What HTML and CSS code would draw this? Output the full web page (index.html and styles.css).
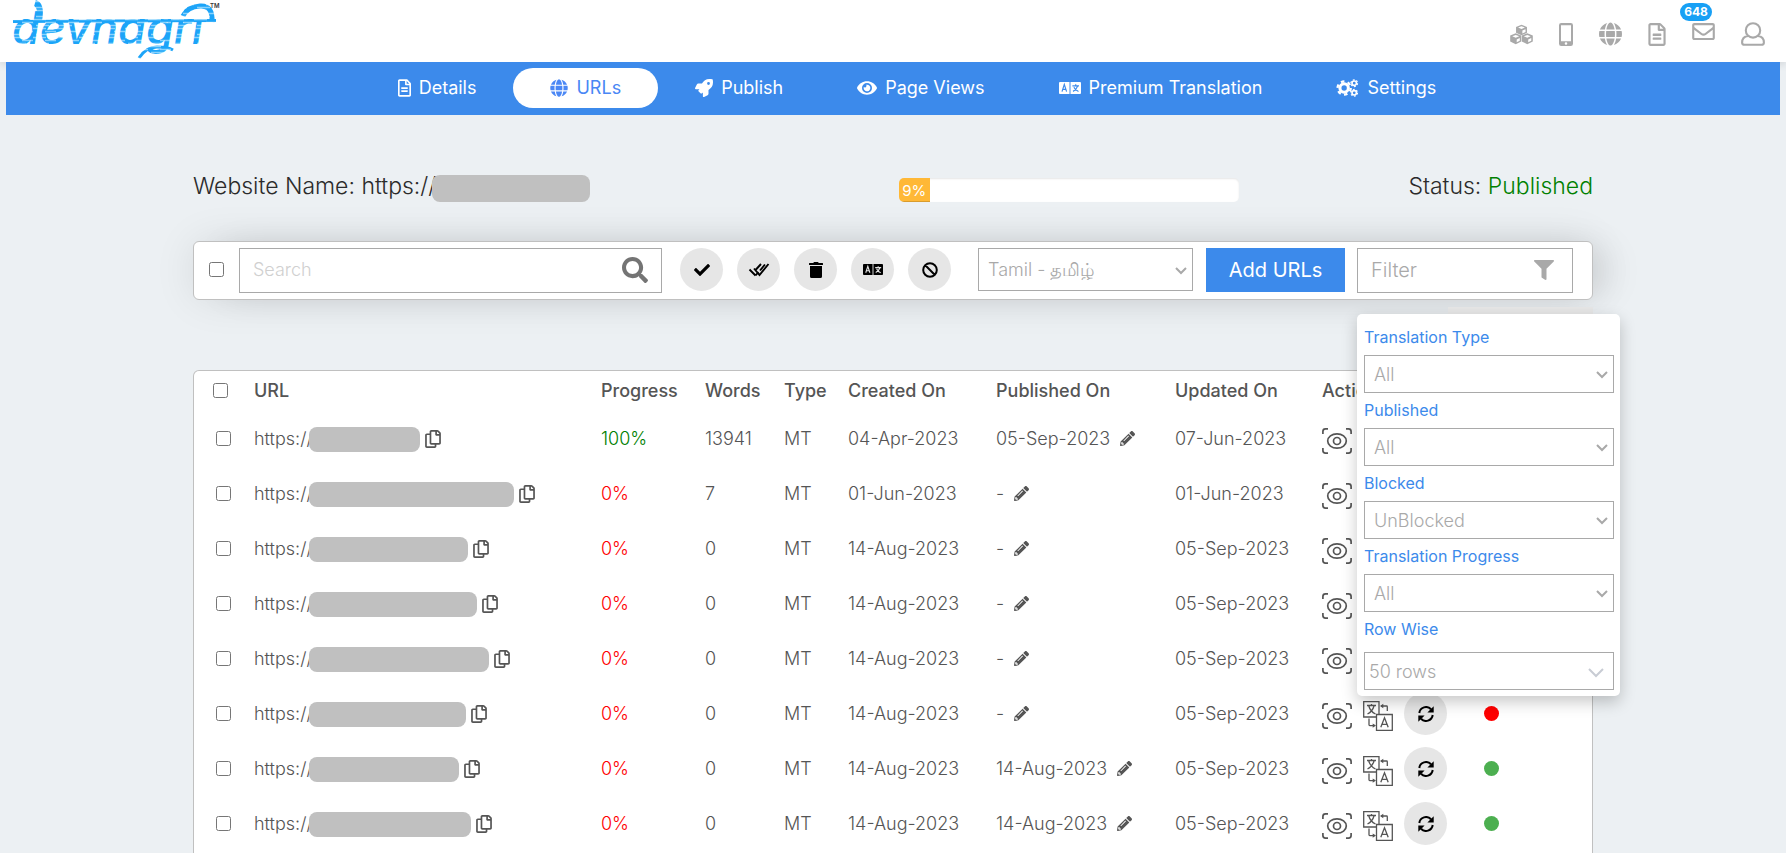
FILE: index.html
```html
<!DOCTYPE html>
<html lang="en">
<head>
<meta charset="utf-8">
<title>Devnagri - URLs</title>
<link rel="stylesheet" href="styles.css">
</head>
<body>
<svg class="sprite" aria-hidden="true">
  <defs>
    <pattern id="brush" width="23" height="9" patternUnits="userSpaceOnUse">
      <rect width="23" height="9" fill="#1ca4f8"/>
      <path d="M0 1.500h13M12 4.500h11M3 7.500h13" stroke="#8ad3fc" stroke-width="1.300"/>
    </pattern>
  </defs>
  <symbol id="check" viewBox="0 0 512 512"><path d="M173.898 439.404l-166.4-166.4c-9.997-9.997-9.997-26.206 0-36.204l36.203-36.204c9.997-9.998 26.207-9.998 36.204 0L192 312.69 432.095 72.596c9.997-9.997 26.207-9.997 36.204 0l36.203 36.204c9.997 9.997 9.997 26.206 0 36.204l-294.4 294.401c-9.998 9.997-26.207 9.997-36.204-.001z"/></symbol>
  <symbol id="check-all" viewBox="0 0 22 16"><path d="M1.500 7.500l6 6M13 2l-5 5.500M6 6.500l5.500 6.500L20.500 2M7.500 13.500l3-3.500M12 8.500L17 2.500" fill="none" stroke="currentColor" stroke-width="1.900"/></symbol>
  <symbol id="search" viewBox="0 0 512 512"><path d="M505 442.700L405.300 343c-4.500-4.500-10.600-7-17-7H372c27.600-35.300 44-79.700 44-128C416 93.100 322.900 0 208 0S0 93.100 0 208s93.100 208 208 208c48.300 0 92.700-16.400 128-44v16.300c0 6.400 2.500 12.500 7 17l99.700 99.700c9.400 9.400 24.600 9.400 33.900 0l28.300-28.300c9.400-9.400 9.400-24.600.1-34zM208 336c-70.700 0-128-57.200-128-128 0-70.700 57.200-128 128-128 70.700 0 128 57.200 128 128 0 70.700-57.200 128-128 128z"/></symbol>
  <symbol id="globe" viewBox="0 0 496 512"><path d="M336.500 160C322 70.700 287.800 8 248 8s-74 62.700-88.500 152h177zM152 256c0 22.200 1.200 43.500 3.300 64h185.300c2.100-20.500 3.300-41.800 3.300-64s-1.200-43.500-3.300-64H155.300c-2.100 20.500-3.300 41.800-3.300 64zm324.700-96c-28.600-67.900-86.500-120.400-158-141.600 24.400 33.800 41.200 84.700 50 141.600h108zM177.200 18.400C105.800 39.600 47.800 92.100 19.300 160h108c8.700-56.900 25.500-107.800 49.900-141.600zM487.400 192H372.700c2.100 21 3.300 42.500 3.300 64s-1.200 43-3.300 64h114.600c5.500-20.500 8.600-41.800 8.600-64s-3.100-43.500-8.500-64zM120 256c0-21.500 1.200-43 3.300-64H8.600C3.200 212.500 0 233.800 0 256s3.200 43.500 8.600 64h114.600c-2-21-3.200-42.500-3.200-64zm39.500 96c14.500 89.300 48.700 152 88.500 152s74-62.700 88.500-152h-177zm159.300 141.600c71.400-21.200 129.400-73.700 158-141.600h-108c-8.800 56.900-25.600 107.800-50 141.600zM19.300 352c28.600 67.900 86.500 120.400 158 141.600-24.400-33.800-41.200-84.700-50-141.600h-108z"/></symbol>
  <symbol id="file" viewBox="0 0 384 512"><path d="M288 248v28c0 6.600-5.400 12-12 12H108c-6.600 0-12-5.400-12-12v-28c0-6.600 5.400-12 12-12h168c6.600 0 12 5.400 12 12zm-12 72H108c-6.600 0-12 5.400-12 12v28c0 6.600 5.400 12 12 12h168c6.600 0 12-5.400 12-12v-28c0-6.600-5.400-12-12-12zm108-188.100V464c0 26.500-21.500 48-48 48H48c-26.500 0-48-21.500-48-48V48C0 21.500 21.500 0 48 0h204.100C264.800 0 277 5.100 286 14.100L369.900 98c9 8.900 14.100 21.200 14.100 33.900zm-128-80V128h76.100L256 51.900zM336 464V176H232c-13.300 0-24-10.700-24-24V48H48v416h288z"/></symbol>
  <symbol id="copy" viewBox="0 0 448 512"><path d="M433.941 65.941l-51.882-51.882A48 48 0 0 0 348.118 0H176c-26.510 0-48 21.490-48 48v48H48c-26.510 0-48 21.490-48 48v320c0 26.510 21.490 48 48 48h224c26.510 0 48-21.490 48-48v-48h80c26.510 0 48-21.490 48-48V99.882a48 48 0 0 0-14.059-33.941zM266 464H54a6 6 0 0 1-6-6V150a6 6 0 0 1 6-6h74v224c0 26.510 21.490 48 48 48h96v42a6 6 0 0 1-6 6zm128-96H182a6 6 0 0 1-6-6V54a6 6 0 0 1 6-6h106v88c0 13.255 10.745 24 24 24h88v202a6 6 0 0 1-6 6zm6-256h-64V48h9.632c1.591 0 3.117.632 4.243 1.757l48.368 48.368a6 6 0 0 1 1.757 4.243V112z"/></symbol>
  <symbol id="mail" viewBox="0 64 512 384"><path d="M464 64H48C21.490 64 0 85.490 0 112v288c0 26.510 21.490 48 48 48h416c26.510 0 48-21.490 48-48V112c0-26.510-21.490-48-48-48zm0 48v40.805c-22.422 18.259-58.168 46.651-134.587 106.490-16.841 13.247-50.201 45.072-73.413 44.701-23.208.375-56.579-31.459-73.413-44.701C106.180 199.465 70.425 171.067 48 152.805V112h416zM48 400V214.398c22.914 18.251 55.409 43.862 104.938 82.646 21.857 17.205 60.134 55.186 103.062 54.955 42.717.231 80.509-37.199 103.053-54.947 49.528-38.783 82.032-64.401 104.947-82.653V400H48z"/></symbol>
  <symbol id="user" viewBox="0 0 24 24"><path d="M12 1.200a7.200 7.200 0 1 1 0 14.400a7.200 7.200 0 1 1 0-14.400zM7 14c-3.500.5-5.900 3-5.900 6.500 0 1.500.9 2.300 2.400 2.300h17c1.500 0 2.400-.8 2.400-2.300 0-3.500-2.400-6-5.900-6.500" fill="none" stroke="currentColor" stroke-width="2.100"/></symbol>
  <symbol id="mobile" viewBox="0 0 14 23"><path fill-rule="evenodd" d="M2.200 0h9.600Q14 0 14 2.200v18.600Q14 23 11.800 23H2.200Q0 23 0 20.800V2.200Q0 0 2.200 0zM2 2.300v15.900h10V2.300zM7 19.200a1.300 1.300 0 1 0 0 2.600a1.300 1.300 0 1 0 0-2.600z"/></symbol>
  <symbol id="cubes" viewBox="0 0 24 21">
    <path d="M12 .3l5.700 2.300v6.100L12 11.300 6.300 8.700V2.600z"/><path d="M12 2l3.600 1.300L12 4.800 8.400 3.300zM12.900 6.400l3.300-1.400v3l-3.300 1.500z" fill="#fff"/>
    <path d="M6 9.200l5.700 2.300v6.200L6 20.700.2 17.700v-6.200zM18 9.200l5.800 2.300v6.200L18 20.700l-5.700-3v-6.200z"/>
    <path d="M6 11l3.600 1.300L6 13.800l-3.600-1.500zM18 11l3.600 1.300-3.600 1.500-3.600-1.500zM7 15.600l3.200-1.400v2.900L7 18.700zM19 15.600l3.200-1.400v2.900L19 18.700z" fill="#fff"/>
  </symbol>
  <symbol id="rocket" viewBox="0 0 512 512"><path d="M505.120 19.094c-1.189-5.531-6.658-11-12.207-12.188C460.716 0 435.507 0 410.407 0 307.175 0 245.269 55.203 199.052 128H94.838c-16.348.016-35.557 11.875-42.887 26.484L2.516 253.297A28.400 28.400 0 0 0 0 264a24 24 0 0 0 24 24h103.816l-22.474 22.469c-11.365 11.361-12.996 32.258 0 45.250l50.904 50.906c11.156 11.188 32.156 13.156 45.277 0l22.475-22.469V488a24 24 0 0 0 24 24 28.560 28.560 0 0 0 10.707-2.516l98.728-49.390c14.629-7.297 26.508-26.500 26.508-42.860V312.797c72.598-46.313 128.035-108.407 128.035-211.094.099-25.203.099-50.406-6.856-82.609zM384.040 168A40 40 0 1 1 424.050 128a40.020 40.020 0 0 1-40.010 40z"/></symbol>
  <symbol id="eye" viewBox="0 0 576 512"><path d="M572.520 241.400C518.290 135.590 410.930 64 288 64S57.680 135.640 3.480 241.410a32.350 32.350 0 0 0 0 29.190C57.710 376.410 165.070 448 288 448s230.320-71.640 284.520-177.410a32.350 32.350 0 0 0 0-29.190zM288 400a144 144 0 1 1 144-144 143.930 143.930 0 0 1-144 144zm0-240a95.310 95.310 0 0 0-25.310 3.790 47.850 47.850 0 0 1-66.900 66.900A95.780 95.780 0 1 0 288 160z"/></symbol>
  <symbol id="language" viewBox="0 0 22 12">
    <path fill-rule="evenodd" stroke="none" d="M1 0h9.500v12H1q-1 0-1-1V1q0-1 1-1zM11.500 0H21q1 0 1 1v10q0 1-1 1h-9.500z"/>
    <path d="M3 9.600L5.300 2.400l2.300 7.200M3.900 7.400h2.800M13.400 3.900h6.600M16.700 2.300v1.600M18.600 4.100q-1.200 3.800-4.600 5.300M14.900 5.200q1.500 3.200 4.600 4.300" fill="none" stroke-width="1.200"/>
  </symbol>
  <symbol id="cogs" viewBox="0 0 24 18">
    <g fill="none" stroke="currentColor">
      <circle cx="8.500" cy="9" r="4.400" stroke-width="3.200"/>
      <circle cx="8.500" cy="9" r="6.900" stroke-width="2.400" stroke-dasharray="3.700 3.520"/>
      <circle cx="19" cy="4" r="2.300" stroke-width="1.700"/><circle cx="19" cy="4" r="3.500" stroke-width="1.200" stroke-dasharray="1.900 1.760"/>
      <circle cx="19" cy="14" r="2.300" stroke-width="1.700"/><circle cx="19" cy="14" r="3.500" stroke-width="1.200" stroke-dasharray="1.900 1.760"/>
    </g>
  </symbol>
  <symbol id="trash" viewBox="0 0 448 512"><path d="M432 32H312l-9.400-18.700A24 24 0 0 0 281.100 0H166.800a23.720 23.720 0 0 0-21.400 13.300L136 32H16A16 16 0 0 0 0 48v32a16 16 0 0 0 16 16h416a16 16 0 0 0 16-16V48a16 16 0 0 0-16-16zM32 128v336a48 48 0 0 0 48 48h288a48 48 0 0 0 48-48V128z"/></symbol>
  <symbol id="ban" viewBox="0 0 16 16"><path d="M8 1.200a6.800 6.800 0 1 1 0 13.600a6.800 6.800 0 1 1 0-13.600zM3.300 3.300l9.400 9.400" fill="none" stroke="currentColor" stroke-width="2"/></symbol>
  <symbol id="filter" viewBox="0 0 512 512"><path d="M487.976 0H24.028C2.710 0-8.047 25.866 7.058 40.971L192 225.941V432c0 7.831 3.821 15.170 10.237 19.662l80 55.980C298.020 518.690 320 507.493 320 487.980V225.941l184.947-184.970C520.021 25.896 509.338 0 487.976 0z"/></symbol>
  <symbol id="pencil" viewBox="0 0 512 512"><path d="M497.900 142.100l-46.100 46.100c-4.700 4.700-12.300 4.700-17 0l-111-111c-4.700-4.700-4.700-12.300 0-17l46.100-46.100c18.700-18.700 49.100-18.700 67.900 0l60.100 60.100c18.800 18.700 18.800 49.100 0 67.900zM284.200 99.800L21.600 362.400.4 483.900c-2.900 16.400 11.400 30.600 27.800 27.800l121.500-21.300 262.600-262.600c4.700-4.700 4.700-12.300 0-17l-111-111c-4.800-4.700-12.400-4.700-17.100 0zM124.100 339.900c-5.500-5.500-5.500-14.300 0-19.800l154-154c5.500-5.500 14.300-5.500 19.800 0s5.500 14.300 0 19.800l-154 154c-5.500 5.500-14.300 5.500-19.800 0zM88 424h48v36.300l-64.500 11.300-31.100-31.100L51.700 376H88v48z"/></symbol>
  <symbol id="view" viewBox="0 0 30 26">
    <g fill="none" stroke="currentColor" stroke-width="1.700">
      <path d="M.9 6V3.500Q.9.900 3.500.900H6M24 .9h2.500q2.600 0 2.600 2.600V6M29.100 20v2.500q0 2.600-2.600 2.600H24M6 25.100H3.500Q.9 25.100.9 22.500V20"/>
      <ellipse cx="15" cy="13" rx="9.300" ry="7.200"/><circle cx="15" cy="13" r="3.500"/>
    </g>
  </symbol>
  <symbol id="translate" viewBox="0 0 30 30">
    <g fill="none" stroke="currentColor" stroke-width="1.300">
      <path d="M13.500 16H.7V.7H16v12.800M13.500 13.500h15.800v15.800H13.500zM18 5h5.500q.8 0 .8.800V10M6 17.500v6.300q0 .8.800.8h4.700"/>
      <path d="M4 4.500h9M8.500 3v1.500M11 5q-1.500 5.500-6.500 8M5.800 5q1.500 5.500 6.700 8M17.800 26.300l3.700-9.600 3.700 9.600M19 23.300h5"/>
    </g>
    <path d="M17 5l3.300-2.200v4.400zM13 24.600l-3.300-2.200v4.400z"/>
  </symbol>
  <symbol id="sync" viewBox="0 0 16 16">
    <path d="M1.300 7A6.800 6.800 0 0 1 13 3.200M14.700 9A6.800 6.800 0 0 1 3 12.800" fill="none" stroke="currentColor" stroke-width="2"/>
    <path d="M15.700.3v6.300H9.400zM.3 15.700V9.400h6.300z"/>
  </symbol>
  <symbol id="chevron" viewBox="0 0 12 8"><path d="M1 1l5 5 5-5" fill="none" stroke="currentColor" stroke-width="2"/></symbol>
  <symbol id="chevron-wide" viewBox="0 0 16 10"><path d="M1 1l7 7 7-7" fill="none" stroke="currentColor" stroke-width="2"/></symbol>
</svg>

<header class="topbar">
  <a class="logo" href="#" aria-label="Devnagri home">
    <svg viewBox="0 0 210 62" width="210" height="62">
      <text class="logo-word" x="2" y="44" fill="url(#brush)">devnagrı</text>
      <g fill="none" stroke="url(#brush)">
        <path d="M3 21.500L206 20.500" stroke-width="3"/>
        <path d="M25 3q7 2 4 18" stroke-width="6"/>
        <path d="M173 16q4-9 17-10q13-1 12 16" stroke-width="5"/>
        <path d="M129 58q7-11 18-11t16 3" stroke-width="3"/>
      </g>
      <text class="logo-mark" x="200" y="8">TM</text>
    </svg>
  </a>
  <div class="tools">
    <button class="tool" aria-label="Projects"><svg width="23" height="21"><use href="#cubes"/></svg></button>
    <button class="tool" aria-label="Mobile"><svg width="14" height="23"><use href="#mobile"/></svg></button>
    <button class="tool" aria-label="Websites"><svg width="23" height="24"><use href="#globe"/></svg></button>
    <button class="tool" aria-label="Documents"><svg width="18" height="23"><use href="#file"/></svg></button>
    <button class="tool tool-mail" aria-label="Messages"><svg width="23" height="17"><use href="#mail"/></svg><span class="badge">648</span></button>
    <button class="tool" aria-label="Account"><svg width="24" height="24"><use href="#user"/></svg></button>
  </div>
</header>

<nav class="nav">
  <a class="nav-link" href="#"><svg width="13" height="18"><use href="#file"/></svg>Details</a>
  <a class="nav-link active" href="#"><svg width="18" height="18"><use href="#globe"/></svg>URLs</a>
  <a class="nav-link" href="#"><svg width="18" height="18"><use href="#rocket"/></svg>Publish</a>
  <a class="nav-link" href="#"><svg width="20" height="18"><use href="#eye"/></svg>Page Views</a>
  <a class="nav-link" href="#"><svg class="on-blue" width="22" height="12"><use href="#language"/></svg>Premium Translation</a>
  <a class="nav-link" href="#"><svg width="23" height="18"><use href="#cogs"/></svg>Settings</a>
</nav>

<main class="page">
  <section class="summary">
    <div class="site">Website Name: https://<span class="mask"></span></div>
    <div class="meter" role="progressbar" aria-valuenow="9" aria-valuemin="0" aria-valuemax="100"><div class="meter-fill" style="width:9%">9%</div></div>
    <div class="status">Status: <span class="good">Published</span></div>
  </section>

  <section class="toolbar">
    <input class="check" type="checkbox" aria-label="Select everything">
    <div class="field search"><input type="search" placeholder="Search" aria-label="Search"><svg width="26" height="26"><use href="#search"/></svg></div>
    <div class="actions">
      <button class="round" aria-label="Approve"><svg width="16" height="16"><use href="#check"/></svg></button>
      <button class="round" aria-label="Approve all"><svg width="22" height="16"><use href="#check-all"/></svg></button>
      <button class="round" aria-label="Delete"><svg width="14" height="16"><use href="#trash"/></svg></button>
      <button class="round" aria-label="Translate"><svg class="on-grey" width="20" height="11"><use href="#language"/></svg></button>
      <button class="round" aria-label="Block"><svg width="16" height="16"><use href="#ban"/></svg></button>
    </div>
    <div class="pick language"><select class="select" aria-label="Language"><option>Tamil - தமிழ்</option></select><svg width="12" height="8"><use href="#chevron"/></svg></div>
    <button class="add">Add URLs</button>
    <div class="filter">
      <div class="field"><input type="text" placeholder="Filter" aria-label="Filter"><svg width="20" height="20"><use href="#filter"/></svg></div>
      <div class="popup">
        <label for="f-type">Translation Type</label>
        <div class="pick"><select class="select" id="f-type"><option>All</option></select><svg width="12" height="8"><use href="#chevron"/></svg></div>
        <label for="f-pub">Published</label>
        <div class="pick"><select class="select" id="f-pub"><option>All</option></select><svg width="12" height="8"><use href="#chevron"/></svg></div>
        <label for="f-block">Blocked</label>
        <div class="pick"><select class="select" id="f-block"><option>UnBlocked</option></select><svg width="12" height="8"><use href="#chevron"/></svg></div>
        <label for="f-prog">Translation Progress</label>
        <div class="pick"><select class="select" id="f-prog"><option>All</option></select><svg width="12" height="8"><use href="#chevron"/></svg></div>
        <label for="f-rows">Row Wise</label>
        <div class="pick pick-rows"><select class="select" id="f-rows"><option>50 rows</option></select><svg width="16" height="10"><use href="#chevron-wide"/></svg></div>
      </div>
    </div>
  </section>

  <div class="strip"></div>

  <section class="panel">
    <table class="urls">
      <colgroup><col class="c-check"><col><col class="c-progress"><col class="c-words"><col class="c-type"><col class="c-created"><col class="c-published"><col class="c-updated"><col class="c-action"><col class="c-state"></colgroup>
      <thead>
        <tr><th><input class="check" type="checkbox" aria-label="Select all URLs"></th><th>URL</th><th>Progress</th><th>Words</th><th>Type</th><th>Created On</th><th>Published On</th><th>Updated On</th><th>Action</th><th></th></tr>
      </thead>
      <tbody id="rows"></tbody>
    </table>
  </section>
</main>
<script src="rows.js"></script>
</body>
</html>
```
FILE: rows.js
```js
const rows = [
  { mask: 111, progress: 100, words: 13941, created: '04-Apr-2023', published: '05-Sep-2023', updated: '07-Jun-2023', live: true },
  { mask: 205, progress: 0, words: 7, created: '01-Jun-2023', published: '-', updated: '01-Jun-2023', live: false },
  { mask: 159, progress: 0, words: 0, created: '14-Aug-2023', published: '-', updated: '05-Sep-2023', live: false },
  { mask: 168, progress: 0, words: 0, created: '14-Aug-2023', published: '-', updated: '05-Sep-2023', live: false },
  { mask: 180, progress: 0, words: 0, created: '14-Aug-2023', published: '-', updated: '05-Sep-2023', live: false },
  { mask: 157, progress: 0, words: 0, created: '14-Aug-2023', published: '-', updated: '05-Sep-2023', live: false },
  { mask: 150, progress: 0, words: 0, created: '14-Aug-2023', published: '14-Aug-2023', updated: '05-Sep-2023', live: true },
  { mask: 162, progress: 0, words: 0, created: '14-Aug-2023', published: '14-Aug-2023', updated: '05-Sep-2023', live: true },
];

const icon = (name, width, height) =>
  `<svg width="${width}" height="${height}"><use href="#${name}"/></svg>`;

document.getElementById('rows').innerHTML = rows.map((row, i) => `
  <tr>
    <td><input class="check" type="checkbox" aria-label="Select URL ${i + 1}"></td>
    <td><div class="url">https://<span class="mask" style="width:${row.mask}px"></span><button class="plain" aria-label="Copy URL">${icon('copy', 16, 18)}</button></div></td>
    <td class="${row.progress === 100 ? 'good' : 'bad'}">${row.progress}%</td>
    <td>${row.words}</td>
    <td>MT</td>
    <td>${row.created}</td>
    <td><div class="published">${row.published}<button class="plain" aria-label="Edit date">${icon('pencil', 15, 15)}</button></div></td>
    <td>${row.updated}</td>
    <td><div class="row-actions">
      <button class="plain" aria-label="Preview">${icon('view', 30, 26)}</button>
      <button class="plain" aria-label="Translate">${icon('translate', 30, 30)}</button>
      <button class="round" aria-label="Refresh">${icon('sync', 16, 16)}</button>
    </div></td>
    <td><span class="dot ${row.live ? 'dot-live' : ''}"></span></td>
  </tr>`).join('');
```
FILE: styles.css
```css
* { box-sizing: border-box; }

body {
  margin: 0;
  min-height: 100vh;
  display: flex;
  flex-direction: column;
  background: #ecf0f3;
  color: #2b2b2b;
  font-family: Inter, "Noto Sans", sans-serif;
  font-weight: 300;
}

svg { display: block; flex: none; fill: currentColor; }
button, input, select { font: inherit; color: inherit; }
button { border: 0; padding: 0; cursor: pointer; }
.sprite { position: absolute; width: 0; height: 0; }

.topbar {
  height: 62px;
  padding: 0 21px 0 10px;
  display: flex;
  justify-content: space-between;
  background: #fff;
  box-shadow: 0 2px 8px rgba(0, 0, 0, .12);
}
.logo-word { font: italic 500 45px Inter, sans-serif; }
.logo-mark { font: 600 6px Inter, sans-serif; fill: #333; }
.tools { display: flex; align-items: center; gap: 26px; padding-top: 6px; color: #a9a9a9; }
.tool { background: none; color: inherit; }
.tool-mail { position: relative; margin-bottom: 6px; }
.badge {
  position: absolute;
  left: -12px;
  bottom: 19px;
  width: 32px;
  border-radius: 9px;
  background: #18a0f5;
  color: #fff;
  font-size: 12px;
  font-weight: 700;
  line-height: 18px;
  text-align: center;
}

.nav {
  margin: 0 6px;
  padding: 6px 0 7px 48px;
  display: flex;
  justify-content: center;
  background: #3c8aeb;
}
.nav-link {
  height: 40px;
  padding: 0 37px 1px;
  display: flex;
  align-items: center;
  gap: 8px;
  border-radius: 20px;
  color: #fff;
  font-size: 18px;
  font-weight: 400;
  text-decoration: none;
}
.nav-link.active { background: #fff; color: #4a87f5; }
.on-blue { stroke: #3c8aeb; }
.on-grey { stroke: #e6e6e6; }

.page {
  width: calc(100% - 32px);
  max-width: 1400px;
  margin: 0 auto;
  flex: 1;
  display: flex;
  flex-direction: column;
}

.summary {
  margin: 56px 0 39px;
  display: grid;
  grid-template-columns: 706px 340px 1fr;
  align-items: center;
  font-size: 23px;
  line-height: 31px;
}
.site { display: flex; align-items: center; }
.mask { background: #c0c0c0; border-radius: 8px; height: 25px; margin-left: -4px; }
.site .mask { width: 158px; height: 27px; margin-top: 4px; }
.meter {
  height: 24px;
  margin-top: 6px;
  border-radius: 5px;
  overflow: hidden;
  background: #fff;
  box-shadow: inset 0 1px 2px rgba(0, 0, 0, .1);
}
.meter-fill {
  height: 100%;
  background: #ffb836;
  box-shadow: inset 0 -1px 0 rgba(0, 0, 0, .15);
  color: #fff;
  font-size: 15px;
  font-weight: 400;
  line-height: 26px;
  text-align: center;
}
.status { text-align: right; }
.good { color: green; }
.bad { color: red; }

.toolbar {
  height: 59px;
  padding: 6px 19px 6px 15px;
  display: flex;
  align-items: flex-start;
  border: 1px solid #c0c0c0;
  border-radius: 6px;
  background: #fff;
  box-shadow: 24px 0 40px -14px rgba(0, 0, 0, .16), 0 0 44px -4px rgba(0, 0, 0, .12);
}
.check { width: 15px; height: 15px; margin: 0; display: block; }
.toolbar > .check { margin: 14px 15px 0 0; }
.field {
  height: 45px;
  padding: 0 13px 2px;
  display: flex;
  align-items: center;
  border: 1px solid #a9a9a9;
  color: #a9a9a9;
}
.field input {
  flex: 1;
  min-width: 0;
  padding: 0;
  border: 0;
  outline: 0;
  background: none;
  font-size: 20px;
}
.field input::placeholder { color: #a9a9a9; }
.search { flex: 1; color: #747474; }
.search input { font-size: 18px; }
.search input::placeholder { color: #d0d0d0; }
.actions { margin: 0 27px 0 18px; display: flex; gap: 14px; }
.round {
  width: 43px;
  height: 43px;
  display: grid;
  place-items: center;
  border-radius: 50%;
  background: #e6e6e6;
  color: #000;
}
.pick { position: relative; }
.pick svg { position: absolute; right: 6px; top: 50%; margin-top: -3px; color: #a9a9a9; pointer-events: none; }
.select {
  display: block;
  width: 100%;
  height: 38px;
  padding: 0 24px 0 9px;
  appearance: none;
  border: 1px solid #a9a9a9;
  border-radius: 0;
  background: #fff;
  color: #a9a9a9;
  font-size: 18px;
}
.language { width: 215px; }
.language .select { height: 43px; }
.add {
  width: 139px;
  height: 44px;
  margin: 0 12px 0 13px;
  background: #3c8aeb;
  color: #fff;
  font-size: 20px;
  font-weight: 400;
}
.filter { position: relative; width: 216px; }
.filter .field { padding-right: 18px; }
.popup {
  position: absolute;
  top: 66px;
  left: 0;
  z-index: 2;
  width: 263px;
  padding: 11px 6px 6px 7px;
  border-radius: 5px;
  background: #fff;
  box-shadow: 0 6px 16px rgba(0, 0, 0, .22);
}
.popup label {
  display: block;
  height: 30px;
  padding-top: 2px;
  color: #3c8aeb;
  font-size: 16px;
  font-weight: 400;
  line-height: 20px;
}
.popup .pick { margin-bottom: 5px; }
.popup .pick-rows { margin: 5px 0 0; }
.pick-rows .select { padding-left: 4px; }
.pick-rows svg { right: 10px; color: #c8ccd4; }

.strip { width: 145px; height: 40px; margin: 7px 0 23px auto; background: #e6e6e6; }

.panel {
  flex: 1;
  border: 1px solid #c0c0c0;
  border-bottom: 0;
  border-radius: 6px 6px 0 0;
  background: #fff;
  color: #555;
}
.urls { width: 100%; table-layout: fixed; border-collapse: collapse; font-size: 18px; }
.urls th, .urls td { padding: 0; text-align: left; white-space: nowrap; }
.urls th { height: 40px; padding-bottom: 2px; font-weight: 500; }
.urls td { height: 55px; }
.urls th .check { margin-left: 19px; }
.urls td .check { margin-left: 22px; }
.c-check { width: 60px; }
.c-progress { width: 104px; }
.c-words { width: 79px; }
.c-type { width: 64px; }
.c-created { width: 148px; }
.c-published { width: 179px; }
.c-updated { width: 147px; }
.c-action { width: 162px; }
.c-state { width: 108px; }
.url, .published, .row-actions { display: flex; align-items: center; }
.url .mask { margin-top: 1px; margin-right: 5px; }
.plain { background: none; color: #555; }
.published { gap: 10px; }
.row-actions { gap: 11px; }
.row-actions .plain { padding-top: 4px; }
.dot { display: block; width: 15px; height: 15px; border-radius: 50%; background: red; }
.dot-live { background: #4caf50; }
```
